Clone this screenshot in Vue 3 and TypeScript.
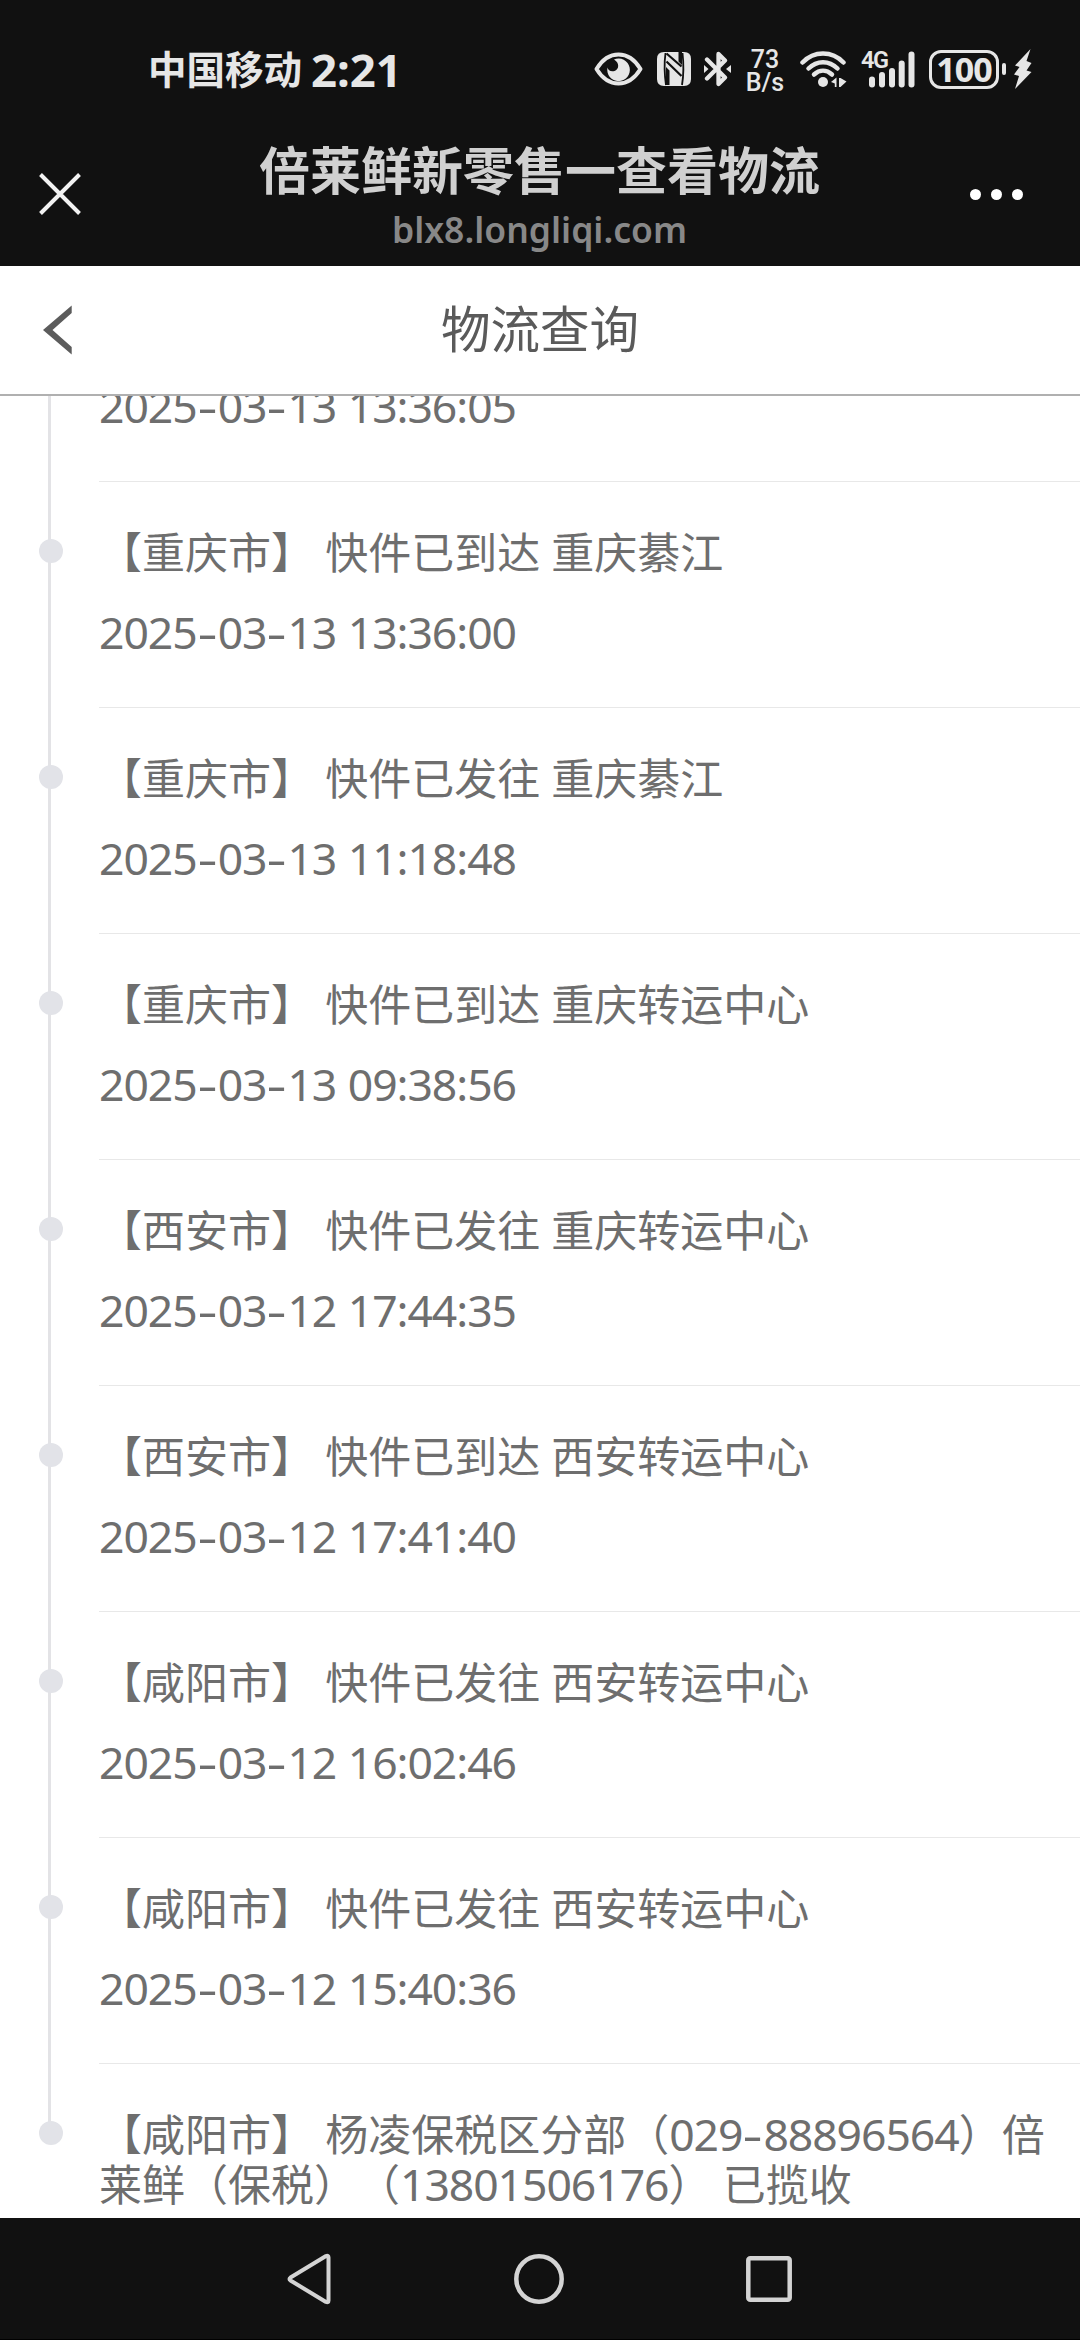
<script setup lang="ts">
interface TrackEvent {
  text: string
  time: string
}

const events: TrackEvent[] = [
  { text: '', time: '2025-03-13 13:36:05' },
  { text: '【重庆市】 快件已到达 重庆綦江', time: '2025-03-13 13:36:00' },
  { text: '【重庆市】 快件已发往 重庆綦江', time: '2025-03-13 11:18:48' },
  { text: '【重庆市】 快件已到达 重庆转运中心', time: '2025-03-13 09:38:56' },
  { text: '【西安市】 快件已发往 重庆转运中心', time: '2025-03-12 17:44:35' },
  { text: '【西安市】 快件已到达 西安转运中心', time: '2025-03-12 17:41:40' },
  { text: '【咸阳市】 快件已发往 西安转运中心', time: '2025-03-12 16:02:46' },
  { text: '【咸阳市】 快件已发往 西安转运中心', time: '2025-03-12 15:40:36' },
  { text: '【咸阳市】 杨凌保税区分部（029-88896564）倍莱鲜（保税）（13801506176） 已揽收', time: '' },
]

type Kind = 'han' | 'digits' | 'dash'

interface Run {
  kind: Kind
  value: string
}

// Splits a line into digit groups, hyphens and the text around them.
const runs = (text: string): Run[] =>
  text
    .split(/(-|\d[\d: ]*)/)
    .filter((v) => v !== '')
    .map((value) => ({ value, kind: value === '-' ? 'dash' : /^\d/.test(value) ? 'digits' : 'han' }))
</script>

<template>
  <div class="screen">
    <header class="top">
      <div class="status">
        <span class="carrier">中国移动</span>
        <span class="clock">2:21</span>
        <div class="icons">
          <svg class="eye" width="49" height="34" viewBox="0 0 49 34">
            <path d="M2.500 17C8 8 15.500 2.500 24.500 2.500S41 8 46.500 17C41 26 33.500 31.500 24.500 31.500S8 26 2.500 17Z" fill="none" stroke="#e6e6e6" stroke-width="4" stroke-linejoin="round" />
            <path d="M20 7.500A11.300 11.300 0 1 1 13.500 15.500C14 18.500 17 20 20.500 19C25 17.500 26 11 20 7.500Z" fill="#e6e6e6" />
          </svg>
          <svg class="nfc" width="34" height="34" viewBox="0 0 34 34">
            <path d="M7 0H27Q34 0 34 7V27Q34 34 27 34H7Q0 34 0 27V7Q0 0 7 0Z" fill="#e6e6e6" />
            <path d="M8.500 1Q6.500 16 9 33M25.500 1Q27.500 18 25 33" fill="none" stroke="#111" stroke-width="1.800" />
            <path d="M9.500 1.500L24.500 14.500M9.500 9.500L24.500 24" fill="none" stroke="#111" stroke-width="2.200" />
            <path d="M9 15L12.500 18.500V33H9ZM25 0V13L21.500 9.500V0Z" fill="#111" />
          </svg>
          <svg class="bt" width="27" height="36" viewBox="0 0 27 36">
            <path d="M3 8.500L21 26.500L14.500 33V3L21 9.500L3 27.500" fill="none" stroke="#e6e6e6" stroke-width="4.300" stroke-linecap="round" stroke-linejoin="round" />
            <path d="M0 14L4.500 18L0 22ZM27 14L22 18L27 22Z" fill="#e6e6e6" />
          </svg>
          <div class="rate"><span>73</span><span>B/s</span></div>
          <svg class="wifi" width="48" height="37" viewBox="0 0 48 37">
            <g fill="none" stroke="#e6e6e6" stroke-width="4.500" stroke-linecap="round">
              <path d="M2.500 11.500C14 -.5 32 -.5 43.500 11.500" />
              <path d="M8.500 17.500C17 9 29 9 37.500 17.500" />
              <path d="M14 23.500C19.500 18.500 26.500 18.500 32 23.500" />
            </g>
            <circle cx="23" cy="31" r="5" fill="#e6e6e6" />
            <path d="M31 31L36.500 26.500V36H34.800V32.500ZM39 27H40.500L46.500 30.500L40.500 36H39Z" fill="#e6e6e6" />
          </svg>
          <div class="cell">
            <span class="gen">4G</span>
            <svg width="54" height="37" viewBox="0 0 54 37">
              <g fill="#e6e6e6">
                <rect x="8" y="25.500" width="6" height="11" rx="3" />
                <rect x="18" y="21" width="6" height="15.500" rx="3" />
                <rect x="28" y="17" width="6" height="19.500" rx="3" />
                <rect x="37.700" y="9.500" width="6" height="27" rx="3" />
                <rect x="47.500" y=".5" width="6" height="36" rx="3" />
              </g>
            </svg>
          </div>
          <div class="battery">100</div>
          <i class="nub"></i>
          <svg class="bolt" width="18" height="40" viewBox="0 0 18 40">
            <path d="M16.500 0L1 16.500L5.500 18L0 25.500L5 27L1 40L17.500 23L12.500 21.500L17.500 14L12.500 12Z" fill="#e6e6e6" />
          </svg>
        </div>
      </div>
      <div class="browser">
        <svg class="close" width="42" height="42" viewBox="0 0 42 42">
          <path d="M1.500 1.500L40.500 40.500M40.500 1.500L1.500 40.500" stroke="#f2f2f2" stroke-width="4" />
        </svg>
        <div class="page">
          <span class="page-title">倍莱鲜新零售一查看物流</span>
          <span class="host">blx8.longliqi.com</span>
        </div>
        <div class="more"><i></i><i></i><i></i></div>
      </div>
    </header>

    <nav class="nav">
      <svg class="back" width="29" height="50" viewBox="0 0 29 50">
        <path d="M28.700 .5V8L9.500 25L28.700 42V49.500L0 25Z" fill="#5c5c5c" />
      </svg>
      <h1>物流查询</h1>
    </nav>

    <main class="track">
      <section v-for="(e, i) in events" :key="i" class="event" :class="{ first: i === 0, last: i === events.length - 1 }">
        <div class="rail"><i v-if="i > 0" class="dot"></i></div>
        <div class="body">
          <p v-if="e.text" class="text"><span v-for="(r, j) in runs(e.text)" :key="j" :class="r.kind">{{ r.value }}</span></p>
          <p v-if="e.time" class="time"><span v-for="(r, j) in runs(e.time)" :key="j" :class="r.kind">{{ r.value }}</span></p>
        </div>
      </section>
    </main>

    <footer class="keys">
      <svg width="44" height="52" viewBox="0 0 44 52">
        <path d="M39 3Q41.500 2 41.500 4.500V47.500Q41.500 50 39 49L3.500 27.500Q1.500 26 3.500 24.500Z" fill="none" stroke="#d4d4d4" stroke-width="4" stroke-linejoin="round" />
      </svg>
      <svg width="50" height="50" viewBox="0 0 50 50">
        <circle cx="25" cy="25" r="22.700" fill="none" stroke="#d4d4d4" stroke-width="4.500" />
      </svg>
      <svg width="46" height="46" viewBox="0 0 46 46">
        <rect x="2.300" y="2.300" width="41.400" height="41.400" rx="2" fill="none" stroke="#d4d4d4" stroke-width="4.500" />
      </svg>
    </footer>
  </div>
</template>

<style>
body {
  margin: 0;
}
</style>

<style scoped>
.screen {
  width: 1080px;
  height: 2340px;
  display: flex;
  flex-direction: column;
  overflow: hidden;
  background: #fff;
  font-family: 'Noto Sans', 'Noto Sans CJK SC', sans-serif;
}

.top {
  height: 266px;
  background: #111;
  flex: none;
}

.status {
  height: 138px;
  box-sizing: border-box;
  padding-left: 148px;
  display: flex;
  align-items: center;
  color: #e6e6e6;
}

.carrier {
  font: 700 38.500px/50px 'Noto Sans CJK SC', sans-serif;
  width: 155px;
  margin-bottom: 4px;
}

.clock {
  font: 700 45.500px/50px 'Noto Sans', sans-serif;
  width: 100px;
  margin-left: 8px;
}

.icons {
  display: flex;
  align-items: center;
  margin-left: 183px;
  height: 50px;
}

.icons > * {
  flex: none;
}

.nfc {
  margin-left: 14px;
}

.bt {
  margin-left: 13px;
}

.rate {
  width: 44px;
  margin-left: 12px;
  display: flex;
  flex-direction: column;
  align-items: center;
  font: 500 25px/23px Roboto, sans-serif;
  padding-top: 3px;
}

.wifi {
  margin-left: 13px;
}

.cell {
  position: relative;
  width: 54px;
  height: 37px;
  margin-left: 13px;
}

.gen {
  position: absolute;
  left: 0;
  top: -2px;
  font: 600 23.500px/22px Roboto, sans-serif;
  letter-spacing: -1.500px;
}

.battery {
  box-sizing: border-box;
  width: 70px;
  height: 39px;
  margin-left: 14px;
  border: 3px solid #e6e6e6;
  border-radius: 12px;
  text-align: center;
  font: 700 34px/33px 'Noto Sans', sans-serif;
  letter-spacing: -1px;
}

.nub {
  width: 4px;
  height: 12px;
  margin-left: 3px;
  border-radius: 2px;
  background: #e6e6e6;
}

.bolt {
  margin-left: 8px;
}

.browser {
  height: 128px;
  display: flex;
  align-items: flex-start;
}

.close {
  margin: 35px 0 0 39px;
  width: 42px;
  flex: none;
}

.page {
  flex: 1;
  display: flex;
  flex-direction: column;
  align-items: center;
  margin-left: 28px;
}

.page-title {
  font: 700 51px/60px 'Noto Sans CJK SC', sans-serif;
  color: #d0d0d0;
}

.host {
  font: 600 35.500px/50px 'Noto Sans', sans-serif;
  margin-top: 6px;
  color: #888;
}

.more {
  display: flex;
  gap: 10px;
  margin: 51px 57px 0 0;
}

.more i {
  width: 11px;
  height: 11px;
  border-radius: 50%;
  background: #fff;
}

.nav {
  flex: none;
  height: 130px;
  box-sizing: border-box;
  border-bottom: 2px solid #b0b0b0;
  display: flex;
  align-items: center;
  padding: 0 43px;
}

.back {
  flex: none;
}

.nav h1 {
  flex: 1;
  margin: 0 29px 7px 0;
  text-align: center;
  font: 400 49.500px/60px 'Noto Sans CJK SC', sans-serif;
  color: #5a5a5a;
}

.track {
  flex: 1;
  overflow: hidden;
  color: #6e6e6e;
}

.event {
  display: flex;
  height: 226px;
}

.first {
  margin-top: -140px;
}

.rail {
  flex: none;
  width: 99px;
  background: linear-gradient(#e3e3e6, #e3e3e6) 48px 0 / 3px 100% no-repeat;
}

.last .rail {
  background-size: 3px 69px;
}

.dot {
  display: block;
  width: 24px;
  height: 24px;
  margin: 57px 0 0 39px;
  border-radius: 50%;
  background: #e2e3e8;
}

.body {
  flex: 1;
  box-sizing: border-box;
  padding: 46px 0 49px;
  border-bottom: 1px solid #e8e8e8;
  display: flex;
  flex-direction: column;
  gap: 30px;
}

.first .body {
  justify-content: flex-end;
}

.last .body {
  border: 0;
  padding-right: 20px;
}

.text,
.time {
  margin: 0;
  font-size: 43px;
  line-height: 50px;
  text-spacing-trim: space-all;
}

.time {
  height: 50px;
}

.digits {
  font-size: 44.500px;
  line-height: 40px;
  letter-spacing: -1.050px;
  word-spacing: 1px;
}

.dash {
  display: inline-block;
  width: 21px;
  line-height: 40px;
  text-align: center;
  transform: scaleX(1.45);
}

.keys {
  flex: none;
  height: 122px;
  box-sizing: border-box;
  padding: 0 288px 0 287px;
  background: #111;
  border-bottom: 1px solid #000;
  display: flex;
  align-items: center;
  justify-content: space-between;
}
</style>
